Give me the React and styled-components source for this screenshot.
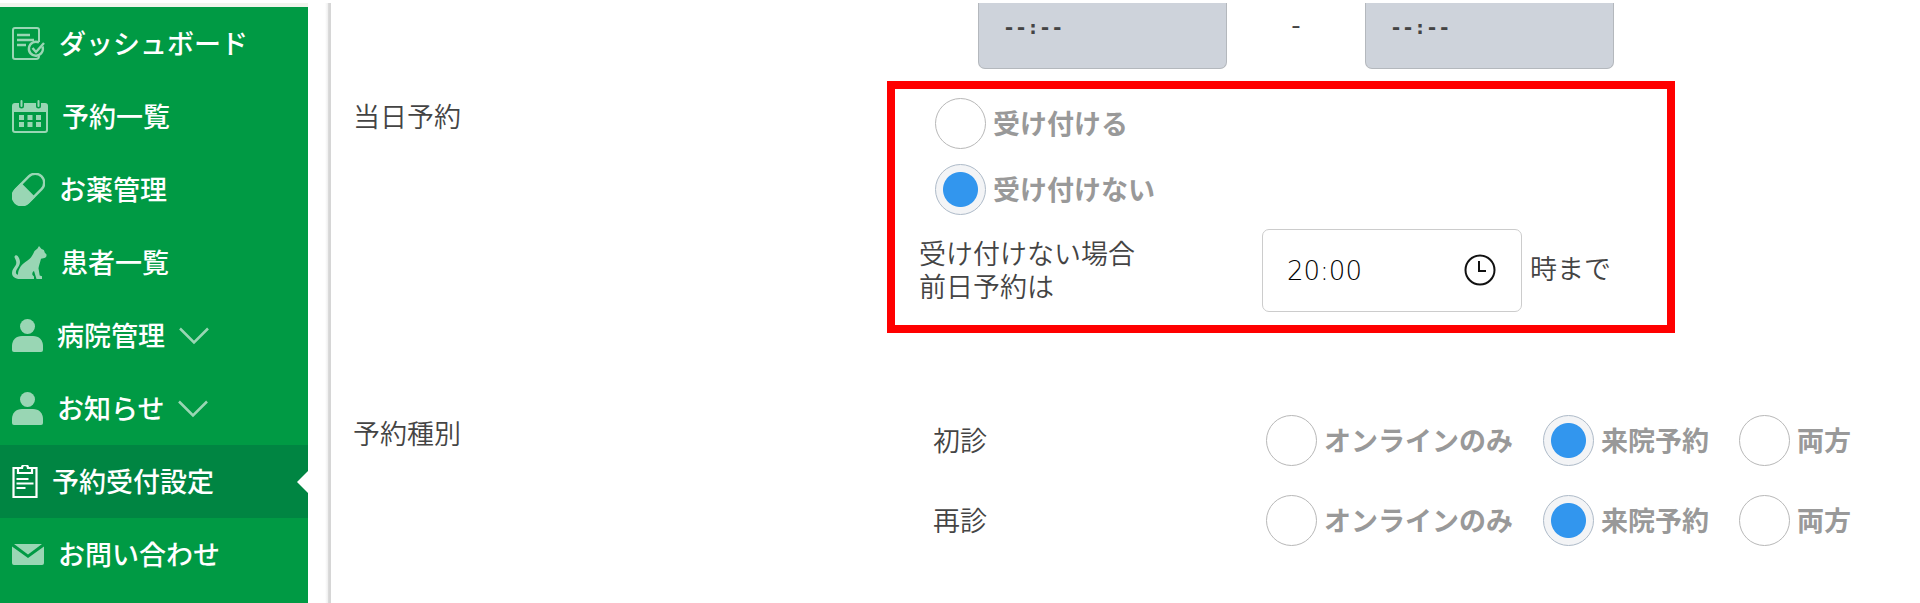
import { useState } from "react";
import styled, { createGlobalStyle } from "styled-components";


function DashboardIcon() {
  return (
    <svg width="33" height="33" viewBox="0 0 33 33" fill="none" stroke="currentColor" strokeWidth="2">
      <path d="M18 32H3a2 2 0 0 1-2-2V3a2 2 0 0 1 2-2h22a2 2 0 0 1 2 2v12" />
      <path d="M18 32h6a3 3 0 0 0 3-3" />
      <path d="M5 8h13M5 13h17M5 18h9" strokeWidth="2.400" />
      <path d="M30.500 19.500a7 7 0 1 1-3.500-4" strokeWidth="2.400" />
      <path d="M20.500 21l3.500 4 8-9" strokeWidth="2.400" />
    </svg>
  );
}

function CalendarIcon() {
  return (
    <svg width="36" height="33" viewBox="0 0 36 33" fill="currentColor">
      <path fillRule="evenodd" d="M3 3h4v3a2.500 2.500 0 0 0 5 0V3h12v3a2.500 2.500 0 0 0 5 0V3h4a3 3 0 0 1 3 3v24a3 3 0 0 1-3 3H3a3 3 0 0 1-3-3V6a3 3 0 0 1 3-3zM2 12v18a1 1 0 0 0 1 1h30a1 1 0 0 0 1-1V12z" />
      <rect x="8.500" y="0" width="2" height="7" rx="1" />
      <rect x="25.500" y="0" width="2" height="7" rx="1" />
      <path d="M7 15h5v5H7zM15.500 15h5v5h-5zM24 15h5v5h-5zM7 22h5v5H7zM15.500 22h5v5h-5zM24 22h5v5h-5z" />
    </svg>
  );
}

function PillIcon() {
  return (
    <svg width="33" height="33" viewBox="0 0 33 33">
      <g transform="rotate(-45 16.500 16.500)">
        <rect x="-2" y="7.500" width="37" height="18" rx="9" fill="none" stroke="currentColor" strokeWidth="2.500" />
        <path d="M16 6.500H7.500a10 10 0 0 0 0 20H16z" fill="currentColor" />
      </g>
    </svg>
  );
}

function CatIcon() {
  return (
    <svg width="35" height="33" viewBox="0 0 35 33" fill="currentColor">
      <path d="M27 0l2.500 3c2 .3 3 1.500 3.200 3.500l1.800 2c.5 3-1.500 4-5.500 4.200-.8 3.500-2 6.800-2.500 9.500l1.200 7.300 2.300.8V33h-5.500l-2.500-8c-1.500 1-2 2.500-1.500 4l1.500 1.500V33H8C3 33 0 30.500 0 27c0-3.500 2-5 3.500-7.500 1.300-2.200 1-4.500-.8-7.800C1.700 9.500 4.500 8.500 5.700 10c3 4 2.800 7.500.6 11C4.800 23.500 3.500 25 4 27c.2 1 1 1.500 2 1.800 0-6 3.500-10.500 9.500-14.300 4-2.500 5-5.500 7-9.500l3-2.500z" />
    </svg>
  );
}

function PersonIcon() {
  return (
    <svg width="31" height="33" viewBox="0 0 31 33" fill="currentColor">
      <circle cx="15.500" cy="7.500" r="7.500" />
      <path d="M0 31v-4c0-6 4-10 10-10h11c6 0 10 4 10 10v4a2 2 0 0 1-2 2H2a2 2 0 0 1-2-2z" />
    </svg>
  );
}

function ClipboardIcon() {
  return (
    <svg width="26" height="33" viewBox="0 0 26 33" fill="none" stroke="currentColor" strokeWidth="2.200">
      <path d="M6 3H1.500v29h23V3H20" />
      <path d="M6 3v5h14V3h-4a3 3 0 0 0-6 0z" />
      <path d="M4.500 14h12M4.500 18.500h17M4.500 23h9" />
    </svg>
  );
}

function MailIcon() {
  return (
    <svg width="32" height="21" viewBox="0 0 32 21" fill="currentColor">
      <path d="M2 0h28L16 10.500z" />
      <path d="M0 2.500l16 11.500L32 2.500V19a2 2 0 0 1-2 2H2a2 2 0 0 1-2-2z" />
    </svg>
  );
}

function ClockIcon() {
  return (
    <svg width="32" height="32" viewBox="0 0 32 32" fill="none" stroke="currentColor" strokeWidth="2">
      <circle cx="16" cy="16" r="14.500" />
      <path d="M15 7v10h7" />
    </svg>
  );
}

const menu = [
  { label: "ダッシュボード", icon: DashboardIcon },
  { label: "予約一覧", icon: CalendarIcon },
  { label: "お薬管理", icon: PillIcon },
  { label: "患者一覧", icon: CatIcon },
  { label: "病院管理", icon: PersonIcon, expandable: true },
  { label: "お知らせ", icon: PersonIcon, expandable: true },
  { label: "予約受付設定", icon: ClipboardIcon, active: true },
  { label: "お問い合わせ", icon: MailIcon },
];

const visitTypes = ["オンラインのみ", "来院予約", "両方"];

function RadioOption({ name, label, value, onChange }) {
  return (
    <RadioLabel>
      <Radio name={name} checked={value === label} onChange={() => onChange(label)} />
      <RadioText>{label}</RadioText>
    </RadioLabel>
  );
}

function VisitRow({ title, name }) {
  const [value, setValue] = useState("来院予約");

  return (
    <VisitLine>
      <VisitTitle>{title}</VisitTitle>
      <VisitOptions role="radiogroup" aria-label={title}>
        {visitTypes.map((type) => (
          <RadioOption key={type} name={name} label={type} value={value} onChange={setValue} />
        ))}
      </VisitOptions>
    </VisitLine>
  );
}

function App() {
  const [sameDay, setSameDay] = useState("受け付けない");
  const [limit, setLimit] = useState("20:00");

  return (
    <>
      <GlobalStyle />
      <Page>
        <Sidebar>
          {menu.map(({ label, icon: Icon, expandable, active }) => (
            <MenuLink key={label} href="#" $active={active}>
              <Icon />
              <MenuText>{label}</MenuText>
              {expandable && (
                <svg width="30" height="18" viewBox="0 0 30 18" fill="none" stroke="currentColor" strokeWidth="2.500">
                  <path d="M1 1.500l14 14 14-14" />
                </svg>
              )}
            </MenuLink>
          ))}
        </Sidebar>

        <Divider />

        <Main>
          <TimeRange>
            <DisabledTime disabled aria-label="開始時刻" defaultValue="--:--" />
            <Dash>-</Dash>
            <DisabledTime disabled aria-label="終了時刻" defaultValue="--:--" />
          </TimeRange>

          <Section>
            <SectionTitle>当日予約</SectionTitle>
            <Highlight>
              <RadioStack role="radiogroup" aria-label="当日予約">
                <RadioOption name="sameDay" label="受け付ける" value={sameDay} onChange={setSameDay} />
                <RadioOption name="sameDay" label="受け付けない" value={sameDay} onChange={setSameDay} />
              </RadioStack>
              <LimitRow>
                <LimitLabel htmlFor="limit">
                  受け付けない場合
                  <br />
                  前日予約は
                </LimitLabel>
                <TimeField>
                  <TimeInput id="limit" value={limit} onChange={(e) => setLimit(e.target.value)} />
                  <ClockButton type="button" aria-label="時刻を選択">
                    <ClockIcon />
                  </ClockButton>
                </TimeField>
                <LimitSuffix>時まで</LimitSuffix>
              </LimitRow>
            </Highlight>
          </Section>

          <VisitSection>
            <SectionTitle $compact>予約種別</SectionTitle>
            <VisitList>
              <VisitRow title="初診" name="first" />
              <VisitRow title="再診" name="repeat" />
            </VisitList>
          </VisitSection>
        </Main>
      </Page>
    </>
  );
}

export default App;

const GlobalStyle = createGlobalStyle`
  * {
    box-sizing: border-box;
  }
  body {
    margin: 0;
    background: #ffffff;
    color: #444444;
    font-family: "Noto Sans CJK JP", sans-serif;
    font-size: 27px;
    font-weight: 350;
    line-height: 33px;
  }
`;

const Page = styled.div`
  display: flex;
  min-height: 100vh;
  padding-top: 3px;
`;

const Sidebar = styled.nav`
  flex: 0 0 308px;
  border-top: 4px solid #f1f4ec;
  background: #009a44;
`;

const MenuLink = styled.a`
  position: relative;
  display: flex;
  align-items: center;
  gap: 14px;
  height: 73px;
  padding-left: 12px;
  color: #ffffff;
  font-weight: 500;
  text-decoration: none;
  white-space: nowrap;
  background: ${({ $active }) => ($active ? "#008542" : "transparent")};

  svg {
    flex: none;
    opacity: ${({ $active }) => ($active ? 1 : 0.6)};
  }

  &::after {
    content: "";
    display: ${({ $active }) => ($active ? "block" : "none")};
    position: absolute;
    top: 50%;
    right: 0;
    margin-top: -11px;
    border: 11px solid transparent;
    border-left-width: 0;
    border-right-color: #ffffff;
  }
`;

const MenuText = styled.span`
  padding-bottom: 2px;
`;

const Divider = styled.div`
  flex: 0 0 6px;
  margin-left: 17px;
  background: linear-gradient(to right, #ffffff, #eeeeee 50%, #d6d6d6 60%);
`;

const Main = styled.main`
  flex: 1;
  min-width: 0;
  padding-left: 22px;
`;

const TimeRange = styled.div`
  display: flex;
  align-items: flex-start;
  padding-left: 625px;
`;

const DisabledTime = styled.input`
  width: 249px;
  height: 66px;
  padding: 0 24px 18px;
  border: 1px solid #b4b8bd;
  border-top: 0;
  border-radius: 0 0 7px 7px;
  background: #ced3db;
  color: #444444;
  font-family: "DejaVu Sans Mono", monospace;
  font-size: 20px;
  font-weight: 700;
`;

const Dash = styled.span`
  width: 138px;
  padding-top: 4px;
  font-weight: 400;
  text-align: center;
`;

const Section = styled.section`
  display: flex;
  align-items: flex-start;
  margin-top: 12px;
`;

const SectionTitle = styled.h2`
  flex: 0 1 534px;
  margin: 0;
  padding-top: ${({ $compact }) => ($compact ? 1 : 18)}px;
  font-size: 27px;
  font-weight: 350;
`;

const Highlight = styled.div`
  flex: 0 0 788px;
  padding: 9px 24px 13px;
  border: 8px solid #ff0000;
`;

const RadioStack = styled.div`
  display: flex;
  flex-direction: column;
  align-items: flex-start;
  gap: 15px;
  padding-left: 16px;
`;

const RadioLabel = styled.label`
  display: flex;
  align-items: center;
  gap: 7px;
  color: #999999;
  font-weight: 700;
  white-space: nowrap;
`;

const RadioText = styled.span`
  padding-bottom: 2px;
`;

const Radio = styled.input.attrs({ type: "radio" })`
  appearance: none;
  flex: none;
  width: 51px;
  height: 51px;
  margin: 0;
  border: 1px solid #b8b8b8;
  border-radius: 50%;
  background: #ffffff;

  &:checked {
    border-color: #adbac8;
    background: radial-gradient(circle, #3296ee 17px, #f3f4f6 18px);
  }
`;

const LimitRow = styled.div`
  display: flex;
  align-items: center;
  gap: 8px;
  margin-top: 14px;
`;

const LimitLabel = styled.label`
  width: 335px;
  padding-bottom: 4px;
`;

const LimitSuffix = styled.span`
  padding-bottom: 6px;
`;

const TimeField = styled.div`
  display: flex;
  align-items: center;
  width: 260px;
  height: 83px;
  padding: 0 25px 2px 24px;
  border: 1px solid #cccccc;
  border-radius: 7px;
`;

const TimeInput = styled.input`
  flex: 1;
  min-width: 0;
  padding: 2px 0 0;
  border: 0;
  outline: 0;
  background: transparent;
  color: #000000;
  font-family: "DejaVu Sans", sans-serif;
  font-size: 26px;
  font-weight: 200;
`;

const ClockButton = styled.button`
  display: flex;
  padding: 0;
  border: 0;
  background: transparent;
  color: #111111;
`;

const VisitSection = styled(Section)`
  margin-top: 82px;
`;

const VisitList = styled.div`
  flex: 1;
  display: flex;
  flex-direction: column;
  gap: 29px;
  padding-left: 46px;
`;

const VisitLine = styled.div`
  display: flex;
  align-items: center;
`;

const VisitTitle = styled.span`
  width: 333px;
  padding-bottom: 2px;
`;

const VisitOptions = styled.div`
  display: flex;
  gap: 30px;
`;
